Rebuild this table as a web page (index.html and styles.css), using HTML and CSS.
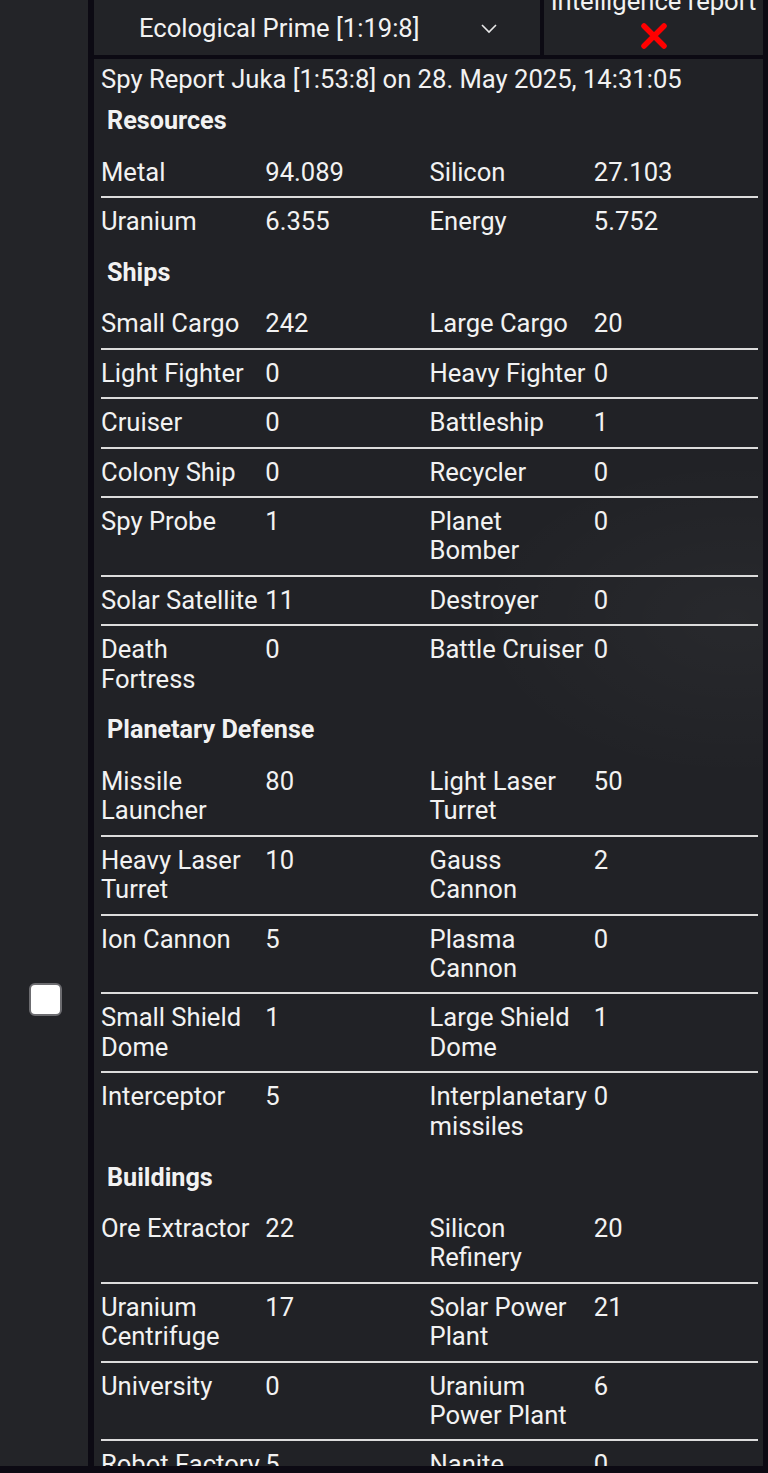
FILE: index.html
```html
<!DOCTYPE html>
<html lang="en">
<head>
    <meta charset="UTF-8">
    <meta name="viewport" content="width=device-width, initial-scale=1.0">
    <title>Spy Report</title>
    <link rel="stylesheet" href="styles.css">
</head>
<body>
    <div class="page">
        <aside class="side">
            <input type="checkbox" class="pick">
        </aside>

        <main class="main">
            <div class="top">
                <div class="planet-select">
                    <span>Ecological Prime [1:19:8]</span>
                    <svg class="chevron" width="18" height="12" viewBox="0 0 18 12">
                        <polyline points="2,3 9,10 16,3" fill="none" stroke="#e8e8e8" stroke-width="1.6"/>
                    </svg>
                </div>
                <div class="intel">
                    <span class="intel-title">Intelligence report</span>
                    <svg class="close" width="30" height="30" viewBox="0 0 30 30">
                        <path d="M5 5 L25 25 M25 5 L5 25" stroke="#ff0000" stroke-width="5.5" stroke-linecap="round"/>
                    </svg>
                </div>
            </div>

            <div class="report">
                <div class="report-title">Spy Report Juka [1:53:8] on 28. May 2025, 14:31:05</div>
                <table class="spy">
                    <tr class="head"><th colspan="4">Resources</th></tr>
                    <tr><td>Metal</td><td>94.089</td><td>Silicon</td><td>27.103</td></tr>
                    <tr class="last"><td>Uranium</td><td>6.355</td><td>Energy</td><td>5.752</td></tr>

                    <tr class="head"><th colspan="4">Ships</th></tr>
                    <tr><td>Small Cargo</td><td>242</td><td>Large Cargo</td><td>20</td></tr>
                    <tr><td>Light Fighter</td><td>0</td><td>Heavy Fighter</td><td>0</td></tr>
                    <tr><td>Cruiser</td><td>0</td><td>Battleship</td><td>1</td></tr>
                    <tr><td>Colony Ship</td><td>0</td><td>Recycler</td><td>0</td></tr>
                    <tr><td>Spy Probe</td><td>1</td><td>Planet Bomber</td><td>0</td></tr>
                    <tr><td>Solar Satellite</td><td>11</td><td>Destroyer</td><td>0</td></tr>
                    <tr class="last"><td>Death Fortress</td><td>0</td><td>Battle Cruiser</td><td>0</td></tr>

                    <tr class="head"><th colspan="4">Planetary Defense</th></tr>
                    <tr><td>Missile Launcher</td><td>80</td><td>Light Laser Turret</td><td>50</td></tr>
                    <tr><td>Heavy Laser Turret</td><td>10</td><td>Gauss Cannon</td><td>2</td></tr>
                    <tr><td>Ion Cannon</td><td>5</td><td>Plasma Cannon</td><td>0</td></tr>
                    <tr><td>Small Shield Dome</td><td>1</td><td>Large Shield Dome</td><td>1</td></tr>
                    <tr class="last"><td>Interceptor</td><td>5</td><td>Interplanetary missiles</td><td>0</td></tr>

                    <tr class="head"><th colspan="4">Buildings</th></tr>
                    <tr><td>Ore Extractor</td><td>22</td><td>Silicon Refinery</td><td>20</td></tr>
                    <tr><td>Uranium Centrifuge</td><td>17</td><td>Solar Power Plant</td><td>21</td></tr>
                    <tr><td>University</td><td>0</td><td>Uranium Power Plant</td><td>6</td></tr>
                    <tr><td>Robot Factory</td><td>5</td><td>Nanite Factory</td><td>0</td></tr>
                    <tr class="last"><td>Shipyard</td><td>12</td><td>Research Lab</td><td>10</td></tr>
                </table>
            </div>
        </main>
    </div>
</body>
</html>
```

FILE: styles.css
```css
/* Spy report page */
body {
    margin: 0;
    background-color: #0c0a13;
    font-family: Roboto, "Liberation Sans", sans-serif;
    color: #f2f2f2;
    overflow: hidden;
}

.page {
    display: flex;
    gap: 6px;
    height: 1466px;
    width: 763px;
    overflow: hidden;
}

.side {
    width: 88px;
    flex-shrink: 0;
    background-color: #232428;
    display: flex;
    align-items: center;
    justify-content: center;
    padding-top: 532px;
    box-sizing: border-box;
}

.pick {
    appearance: none;
    width: 33px;
    height: 33px;
    margin: 0 0 0 3px;
    background-color: #fff;
    border: 2px solid #6c6c70;
    border-radius: 6px;
}

.main {
    flex: 1;
    display: flex;
    flex-direction: column;
    gap: 4px;
}

.top {
    display: flex;
    gap: 4px;
    height: 55px;
    flex-shrink: 0;
}

.planet-select {
    width: 446px;
    background-color: #222327;
    display: flex;
    align-items: center;
    padding-left: 45px;
    box-sizing: border-box;
    font-size: 25.6px;
}

.chevron {
    margin-left: 60px;
}

.intel {
    flex: 1;
    background-color: #222327;
    display: flex;
    flex-direction: column;
    align-items: center;
    overflow: hidden;
}

.intel-title {
    font-size: 25.6px;
    line-height: 30px;
    margin-top: -14px;
}

.close {
    margin-top: 5px;
}

.report {
    flex: 1;
    background-color: #212226;
    background-image: radial-gradient(ellipse 260px 160px at 640px 560px, rgba(255,255,255,0.03), transparent);
    padding: 4.5px 5px 0 7px;
}

.report-title {
    font-size: 25.6px;
    line-height: 30px;
}

.spy {
    width: 657px;
    table-layout: fixed;
    border-collapse: collapse;
    font-size: 25.6px;
    line-height: 29.4px;
}

.spy td {
    padding: 9px 2px 9px 0;
    vertical-align: top;
    text-align: left;
}

.spy tr {
    border-bottom: 2px solid #dcdcdc;
}

.spy tr.last,
.spy tr.head {
    border-bottom: none;
}

.spy th {
    text-align: left;
    font-weight: bold;
    font-size: 25.2px;
    line-height: 30px;
    padding: 12.5px 0 12.5px 6px;
}
```
